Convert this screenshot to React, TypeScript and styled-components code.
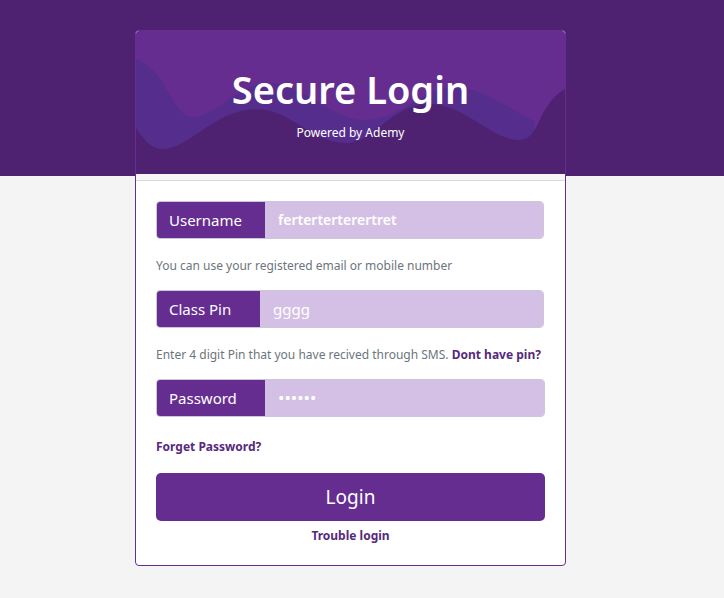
import React, { useState } from "react";
import styled, { createGlobalStyle } from "styled-components";

const GlobalStyle = createGlobalStyle`
  *, *::before, *::after { box-sizing: border-box; }
  body {
    margin: 0;
    background: #f4f4f4;
    font-family: "Noto Sans", "Open Sans", sans-serif;
    font-size: 15px;
    line-height: 24px;
    color: #212529;
  }
`;

const Page = styled.main`
  display: flex;
  justify-content: center;
  align-items: flex-start;
  min-height: 100vh;
  padding: 30px 23px 32px 0;
  background: linear-gradient(#4e2270 176px, #f4f4f4 176px);
`;

const Card = styled.section`
  width: 100%;
  max-width: 431px;
  border: 1px solid #662d91;
  border-radius: 4px;
  background: #fff;
  overflow: hidden;
`;

const CardHeader = styled.header`
  padding-bottom: 6px;
  border-bottom: 1px solid #dadada;
  background: #f7f7f7;
`;

const Banner = styled.div`
  display: grid;
  background: #662d91;
  color: #fff;
  text-align: center;
  & > * { grid-area: 1 / 1; }
`;

const Waves = styled.svg`
  display: block;
  width: 100%;
  height: 143px;
`;

const BannerText = styled.div`
  padding-top: 34px;
`;

const Title = styled.h1`
  margin: 0;
  font-size: 38px;
  font-weight: 600;
  line-height: 48px;
`;

const Tagline = styled.p`
  margin: 8px 0 0;
  font-size: 12px;
`;

const Form = styled.form`
  padding: 20px 20px 17px;
`;

const Group = styled.div<{ $inset?: boolean }>`
  display: flex;
  height: 38px;
  margin-right: ${(p) => (p.$inset ? "1px" : "0")};
  border: 1px solid #cdc6d8;
  border-radius: 4px;
  overflow: hidden;
`;

const Addon = styled.label<{ $width: number }>`
  flex: none;
  width: ${(p) => p.$width}px;
  padding: 6px 12px;
  background: #662d91;
  color: #fff;
`;

const Field = styled.input<{ $bold?: boolean }>`
  flex: 1;
  min-width: 0;
  padding: 6px 13px;
  border: 0;
  outline: 0;
  background: #d5c0e5;
  color: #fff;
  font: inherit;
  font-size: ${(p) => (p.$bold ? "14px" : "15px")};
  font-weight: ${(p) => (p.$bold ? 600 : 400)};

  &[type="password"] {
    font-size: 17px;
  }
`;

const Help = styled.p`
  margin: 15px 0 12px;
  color: #6c757d;
  font-size: 12px;
`;

const TextLink = styled.a`
  color: #56297c;
  font-size: 12px;
  font-weight: 700;
  text-decoration: none;
`;

const LinkRow = styled.div<{ $center?: boolean }>`
  margin-top: ${(p) => (p.$center ? "1px" : "16px")};
  text-align: ${(p) => (p.$center ? "center" : "left")};
`;

const LoginButton = styled.button`
  display: block;
  width: 100%;
  height: 48px;
  margin-top: 14px;
  padding: 0;
  border: 0;
  border-radius: 5px;
  background: #662d91;
  color: #fff;
  font: inherit;
  font-size: 19px;
  cursor: pointer;
`;

export default function App() {
  const [username, setUsername] = useState("ferterterterertret");
  const [pin, setPin] = useState("gggg");
  const [password, setPassword] = useState("secret");

  return (
    <>
      <GlobalStyle />
      <Page>
        <Card>
          <CardHeader>
            <Banner>
              <Waves viewBox="0 0 429 143" preserveAspectRatio="none" aria-hidden="true">
                <path
                  fill="#552d8d"
                  d="M0 28C20 36 28 54 37 69C46 83 50 86 58 86C80 85 100 55 130 52C165 50 195 88 227 89C264 90 285 57 317 56C345 56 372 76 399 91L390 143H0Z"
                />
                <path
                  fill="#4e2270"
                  d="M0 97C9 110 15 118 27 118C54 118 78 78 121 78C154 78 176 112 210 112C239 112 254 73 294 73C328 73 356 109 383 109C405 109 400 75 429 58V143H0Z"
                />
              </Waves>
              <BannerText>
                <Title>Secure Login</Title>
                <Tagline>Powered by Ademy</Tagline>
              </BannerText>
            </Banner>
          </CardHeader>
          <Form onSubmit={(e) => e.preventDefault()}>
            <Group $inset>
              <Addon htmlFor="username" $width={108}>Username</Addon>
              <Field id="username" $bold value={username} onChange={(e) => setUsername(e.target.value)} />
            </Group>
            <Help>You can use your registered email or mobile number</Help>
            <Group $inset>
              <Addon htmlFor="pin" $width={103}>Class Pin</Addon>
              <Field id="pin" value={pin} onChange={(e) => setPin(e.target.value)} />
            </Group>
            <Help>
              Enter 4 digit Pin that you have recived through SMS.{" "}
              <TextLink href="#pin-help">Dont have pin?</TextLink>
            </Help>
            <Group>
              <Addon htmlFor="password" $width={108}>Password</Addon>
              <Field
                id="password"
                type="password"
                value={password}
                onChange={(e) => setPassword(e.target.value)}
              />
            </Group>
            <LinkRow>
              <TextLink href="#forget">Forget Password?</TextLink>
            </LinkRow>
            <LoginButton type="submit">Login</LoginButton>
            <LinkRow $center>
              <TextLink href="#trouble">Trouble login</TextLink>
            </LinkRow>
          </Form>
        </Card>
      </Page>
    </>
  );
}
